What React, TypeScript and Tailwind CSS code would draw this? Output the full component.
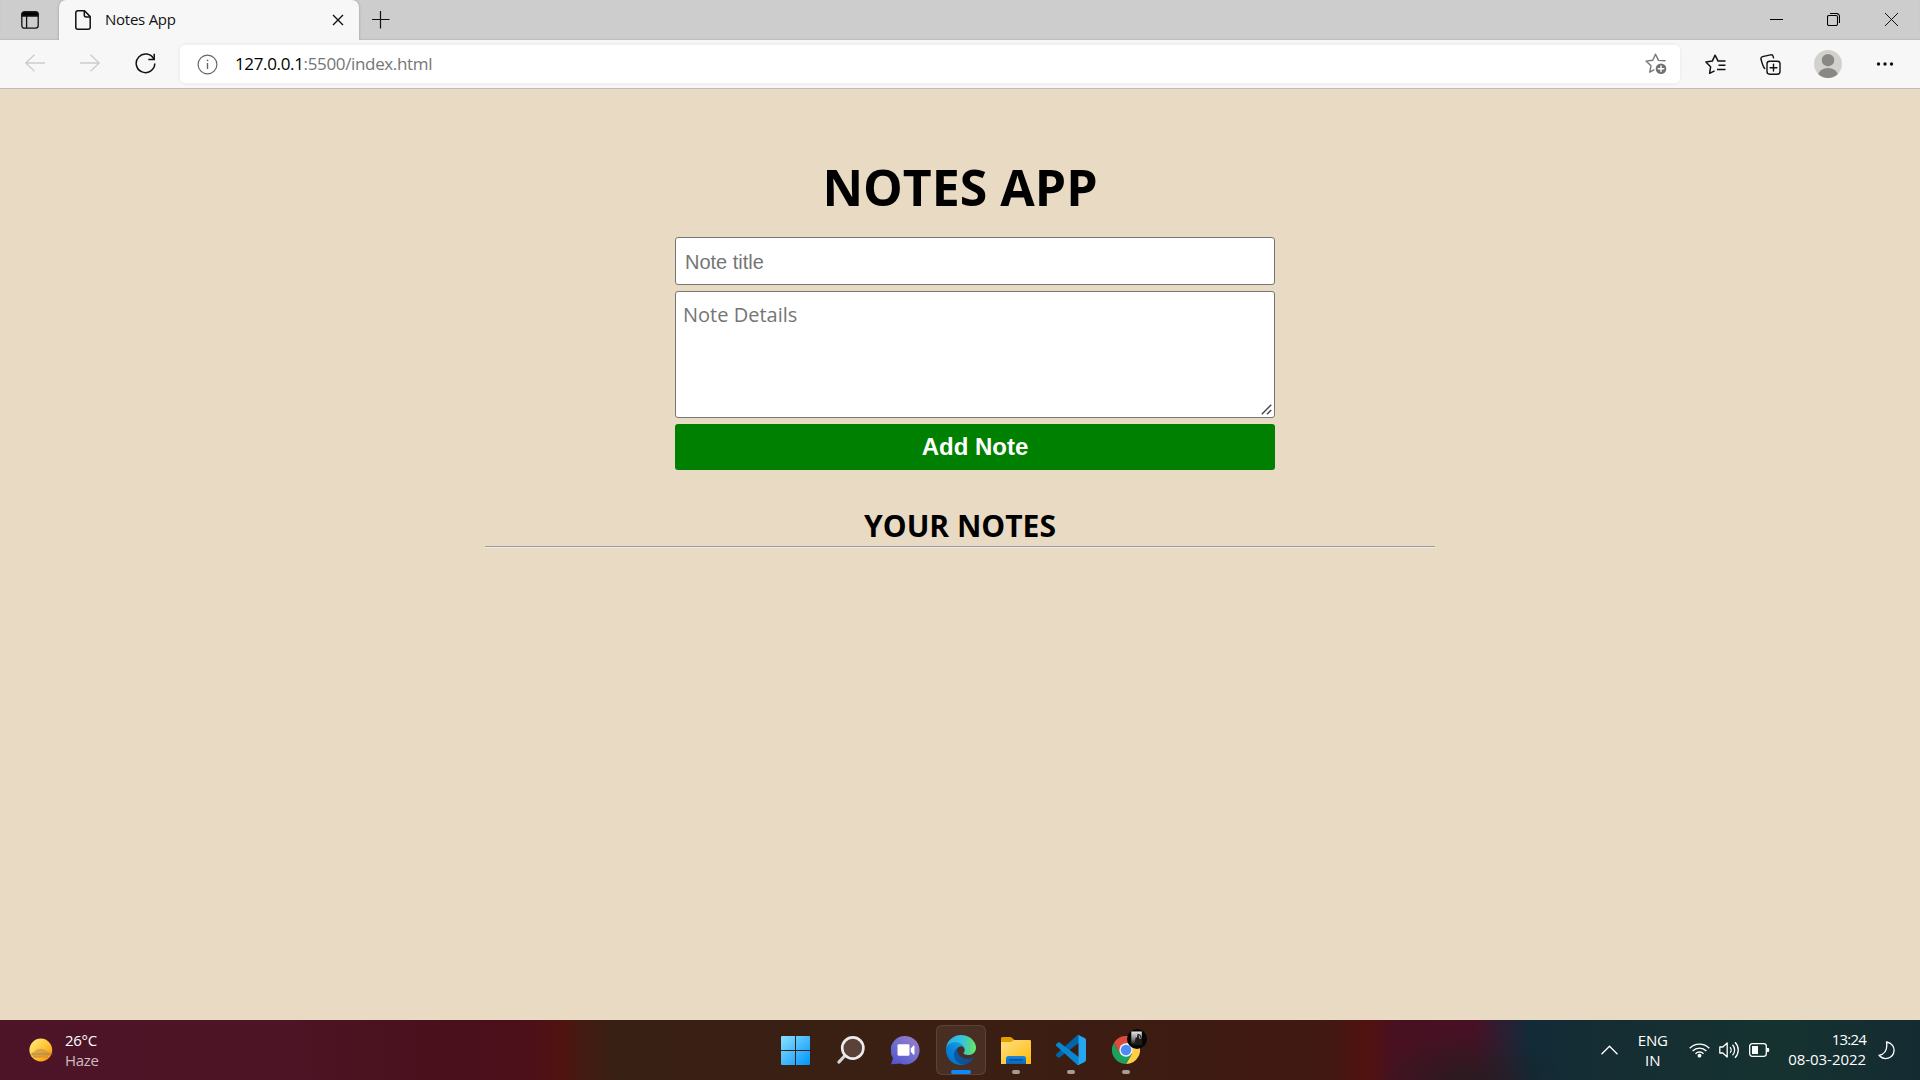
import React from "react";

function TabStrip() {
  return (
    <div className="flex h-10 shrink-0 bg-[#cdcdcd] shadow-[inset_0_-1px_1px_#bdbdbd]">
      <div className="flex w-[59px] items-center pl-[21px]">
        <svg width="18" height="18" viewBox="0 0 18 18" fill="none" stroke="#111" strokeWidth="1.3">
          <rect x="0.8" y="0.8" width="16.4" height="16.4" rx="2.6" />
          <path d="M1 3.4A2.4 2.4 0 0 1 3.4 1h11.2A2.4 2.4 0 0 1 17 3.4V5H1z" fill="#000" />
          <path d="M5.6 5v12" />
        </svg>
      </div>
      <div className="relative flex w-[300px] items-center rounded-t-[7px] bg-[#f7f7f7] pl-4 shadow-[0_0_3px_rgba(0,0,0,0.25)] [clip-path:inset(-4px_-4px_0_-4px)]">
        <svg width="16" height="20" viewBox="0 0 16 20" fill="none" stroke="#111" strokeWidth="1.5" strokeLinejoin="round">
          <path d="M2.8.8h6.7l5.7 5.8v10.6a2 2 0 0 1-2 2H2.8a2 2 0 0 1-2-2V2.8a2 2 0 0 1 2-2z" />
          <path d="M9.3 1v4a2 2 0 0 0 2 2H15" />
        </svg>
        <span className="mb-[2px] ml-[14px] text-[15px] leading-5 tracking-[-0.25px] text-[#111]">Notes App</span>
        <svg className="ml-auto mr-[15px]" width="12" height="12" viewBox="0 0 12 12" stroke="#111" strokeWidth="1.4">
          <path d="M1 1l10 10M11 1L1 11" />
        </svg>
      </div>
      <svg className="ml-[13px] mt-[11px]" width="18" height="18" viewBox="0 0 18 18" stroke="#111" strokeWidth="1.2">
        <path d="M0 8.5h17.500M8.500 0v17.500" />
      </svg>
      <div className="ml-auto flex items-center pb-[1px]">
        <svg className="mr-[44px]" width="13" height="13" viewBox="0 0 13 13" stroke="#000">
          <path d="M0 6.5h13" />
        </svg>
        <svg className="mr-[45px]" width="13" height="13" viewBox="0 0 13 13" fill="none" stroke="#000" strokeWidth="1.1">
          <rect x="0.5" y="2.5" width="10" height="10" rx="1.5" />
          <path d="M3 .5h6.500a3 3 0 0 1 3 3v6.500" />
        </svg>
        <svg className="mr-[22px]" width="13" height="13" viewBox="0 0 13 13" stroke="#111" strokeWidth="1">
          <path d="M0 0l13 13M13 0L0 13" />
        </svg>
      </div>
    </div>
  );
}

function AddressRow() {
  return (
    <div className="flex h-[49px] shrink-0 items-center border-b border-[#bcbcc0] bg-[#f7f7f7]">
      <svg className="mb-[2px] ml-[25px]" width="20" height="18" viewBox="0 0 20 18" fill="none" stroke="#cdcdcd" strokeWidth="1.3">
        <path d="M20 9H1M9.500.8L.8 9l8.700 8.200" />
      </svg>
      <svg className="mb-[2px] ml-[35px]" width="20" height="18" viewBox="0 0 20 18" fill="none" stroke="#cdcdcd" strokeWidth="1.3">
        <path d="M0 9h19M10.500.8L19.200 9l-8.700 8.200" />
      </svg>
      <svg className="mb-[1px] ml-[35px]" width="21" height="21" viewBox="0 0 21 21" fill="none" stroke="#111" strokeWidth="1.5">
        <path d="M18.900 6.300A9.300 9.300 0 1 0 19.800 10.500" />
        <path d="M19.200.8v5.700h-5.900" />
      </svg>
      <div className="ml-6 flex h-[38px] w-[1500px] items-center rounded-[5px] bg-white shadow-[0_0_4px_rgba(0,0,0,0.07)]">
        <svg className="ml-[17px]" width="21" height="21" viewBox="0 0 21 21" fill="none" stroke="#666" strokeWidth="1.2">
          <circle cx="10.5" cy="10.5" r="9.4" />
          <path d="M10.500 9v6" strokeWidth="1.4" />
          <circle cx="10.5" cy="6.3" r="0.9" fill="#666" stroke="none" />
        </svg>
        <span className="ml-[17px] text-[17px] leading-6 tracking-[-0.35px] text-[#757575]">
          <span className="text-black">127.0.0.1</span>:5500/index.html
        </span>
        <svg className="ml-auto mr-[13px]" width="22" height="22" viewBox="0 0 22 22" fill="none" stroke="#777" strokeWidth="1.4" strokeLinejoin="round" strokeLinecap="round">
          <path d="M20 7.800l-6.500-.4L10.500 1.200 7.800 7.300 1 8.100l5 4.700-1.300 6.400 4.200-2.300" />
          <circle cx="16" cy="15.8" r="5.3" fill="#707070" stroke="none" />
          <path d="M16 13v5.600M13.200 15.800h5.600" stroke="#fff" />
        </svg>
      </div>
      <svg className="ml-[25px]" width="21" height="21" viewBox="0 0 21 21" fill="none" stroke="#111" strokeWidth="1.5" strokeLinejoin="round">
        <path d="M13 6.800l-3-5.600-2.700 5.900-6.400.9 4.700 4.800-1 6.500 5-2.500M12.300 7h8.200M13.500 11.200h7M12 15.400h8.500" />
      </svg>
      <svg className="ml-[34px]" width="21" height="21" viewBox="0 0 21 21" fill="none" stroke="#111" strokeWidth="1.4" strokeLinecap="round">
        <rect x="7" y="7.2" width="13" height="13" rx="2.6" />
        <path d="M13.500 10.300v6.800M10.100 13.700h6.800" />
        <path d="M4.700 14.500C3.200 13.200 2.800 12 1 5.300.7 4 1.500 3 2.500 2.600L10.500.9c1.300-.3 2.400.4 2.700 1.700l.3 1.200" />
      </svg>
      <svg className="ml-8" width="30" height="30" viewBox="0 0 30 30">
        <clipPath id="avatar"><circle cx="15" cy="15" r="14" /></clipPath>
        <circle cx="15" cy="15" r="14" fill="#d3d1ce" />
        <g clipPath="url(#avatar)" fill="#8b8785">
          <circle cx="15" cy="11.2" r="6.2" />
          <ellipse cx="15" cy="27" rx="10" ry="8" />
        </g>
      </svg>
      <svg className="ml-[33px]" width="18" height="4" viewBox="0 0 18 4" fill="#111">
        <circle cx="2.5" cy="2" r="1.7" /><circle cx="9" cy="2" r="1.7" /><circle cx="15.5" cy="2" r="1.7" />
      </svg>
    </div>
  );
}

function NotesPage() {
  return (
    <main className="flex flex-1 flex-col items-center bg-[#e8dac3] pt-16">
      <h1 className="text-[50px] font-bold leading-[68px] text-black">NOTES APP</h1>
      <form className="ml-[30px] mt-4 flex w-[600px] flex-col gap-1.5">
        <input
          placeholder="Note title"
          className="h-12 rounded-[3px] border border-[#767676] bg-white px-[9px] pt-0.5 font-['Liberation_Sans',sans-serif] text-[20px] placeholder:text-[#757575]"
        />
        <div className="relative flex h-[127px]">
          <textarea
            placeholder="Note Details"
            className="w-full resize-none rounded-[3px] border border-[#767676] bg-white px-[7px] pt-[9px] text-[20px] leading-[27px] placeholder:text-[#757575]"
          />
          <svg className="absolute bottom-[3px] right-[3px]" width="11" height="11" viewBox="0 0 11 11" stroke="#4a4a4a" strokeWidth="1.5">
            <path d="M.8 10.200L10.200.8M6 10.200L10.200 6" />
          </svg>
        </div>
        <button
          type="button"
          className="h-[46px] rounded-[3px] bg-[#008000] font-['Liberation_Sans',sans-serif] text-[24px] font-bold text-white"
        >
          Add Note
        </button>
      </form>
      <h2 className="mt-[35px] text-[30px] font-bold leading-[41px] text-black">YOUR NOTES</h2>
      <hr className="w-[950px] border-0 border-t border-[#9a9a9a] shadow-[0_1px_0_#eeeeee]" />
    </main>
  );
}

function Slot({ children, running }: { children: React.ReactNode; running?: boolean }) {
  return (
    <div className="relative flex h-[60px] w-[55px] items-center justify-center">
      {children}
      {running && <span className="absolute bottom-[6px] left-6 h-1 w-2 rounded-full bg-[#a89a97]" />}
    </div>
  );
}

function WindowsIcon() {
  return (
    <svg width="29" height="29" viewBox="0 0 29 29">
      <linearGradient id="win" x1="0" y1="0" x2="29" y2="29" gradientUnits="userSpaceOnUse">
        <stop offset="0" stopColor="#8be0ff" /><stop offset="1" stopColor="#0093fb" />
      </linearGradient>
      <path d="M1 0h13v14H0V1a1 1 0 0 1 1-1zM15 0h13a1 1 0 0 1 1 1v13H15zM0 15h14v14H1a1 1 0 0 1-1-1zM15 15h14v13a1 1 0 0 1-1 1H15z" fill="url(#win)" />
    </svg>
  );
}

function SearchIcon() {
  return (
    <svg width="28" height="28" viewBox="0 0 28 28">
      <path d="M8.500 19L2 26" stroke="#d5d5d5" strokeWidth="3.3" strokeLinecap="round" />
      <circle cx="15.8" cy="12" r="10.6" fill="#5a4239" stroke="#ececec" strokeWidth="2.6" />
    </svg>
  );
}

function ChatIcon() {
  return (
    <svg width="29" height="29" viewBox="0 0 29 29">
      <linearGradient id="chat" x1="1" y1="0" x2="0.2" y2="1">
        <stop offset="0" stopColor="#a47bc9" /><stop offset="0.5" stopColor="#7471ce" /><stop offset="1" stopColor="#5257cf" />
      </linearGradient>
      <path d="M14.500 0A14.300 14.300 0 1 1 9 27.600L1.500 28.200C.5 28.300 0 27.500.5 26.700L2 22.200A14.300 14.300 0 0 1 14.500 0z" fill="url(#chat)" />
      <rect x="6.5" y="8.3" width="12" height="11.5" rx="1.3" fill="#fff" />
      <path d="M19.800 12.400l2.500-2.600c.6-.6 1.200-.4 1.200.4v7.800c0 .8-.6 1-1.200.4l-2.500-2.600z" fill="#fff" />
    </svg>
  );
}

function EdgeIcon() {
  return (
    <svg className="shrink-0" width="30" height="30" viewBox="0 0 256 256">
      <linearGradient id="edgeA" x1="63" y1="178" x2="241" y2="178" gradientUnits="userSpaceOnUse">
        <stop offset="0" stopColor="#0c59a4" /><stop offset="1" stopColor="#114a8b" />
      </linearGradient>
      <linearGradient id="edgeB" x1="157" y1="100" x2="46" y2="221" gradientUnits="userSpaceOnUse">
        <stop offset="0" stopColor="#1b9de2" /><stop offset="0.16" stopColor="#1595df" /><stop offset="0.67" stopColor="#0680d7" /><stop offset="1" stopColor="#0078d4" />
      </linearGradient>
      <linearGradient id="edgeC" x1="10" y1="90" x2="250" y2="110" gradientUnits="userSpaceOnUse">
        <stop offset="0" stopColor="#2cb1e4" /><stop offset="0.5" stopColor="#33c3e0" /><stop offset="0.8" stopColor="#50d48f" /><stop offset="1" stopColor="#66eb6e" />
      </linearGradient>
      <path fill="url(#edgeA)" d="M231 190.500c-3.400 1.800-6.900 3.400-10.500 4.700a101.700 101.700 0 0 1-35.900 6.400c-47.300 0-88.500-32.500-88.500-74.300 0-11.400 6.300-21.900 16.500-27.500-42.800 1.800-53.800 46.400-53.800 72.500 0 73.900 68.100 81.400 82.800 81.400 7.900 0 19.800-2.300 27-4.600l1.300-.4a128.300 128.300 0 0 0 66.600-52.800 4 4 0 0 0-5.500-5.400z" />
      <path fill="url(#edgeB)" d="M105.700 241.400a79.200 79.200 0 0 1-22.700-21.300 80.700 80.700 0 0 1 29.500-120c3.200-1.500 8.500-4.100 15.600-4a32.400 32.400 0 0 1 25.700 13 31.900 31.900 0 0 1 6.300 18.700c0-.2 24.500-79.600-80-79.600-43.900 0-80 41.700-80 78.200a130.200 130.200 0 0 0 12.100 56 128 128 0 0 0 156.400 67 75.500 75.500 0 0 1-62.800-8z" />
      <path fill="url(#edgeC)" d="M152.300 148.900c-.9 1-3.400 2.500-3.400 5.600 0 2.600 1.700 5.200 4.800 7.300 14.300 10 41.400 8.600 41.500 8.600a59.600 59.600 0 0 0 30.300-8.300 61.400 61.400 0 0 0 30.400-52.900c.3-22.400-8-37.300-11.300-43.900C223.500 23.900 177.700 0 128 0A128 128 0 0 0 0 126.200c.5-36.500 36.800-66 80-66 3.500 0 23.500.3 42 10.100 16.300 8.600 24.900 18.900 30.800 29.200 6.200 10.700 7.300 24.100 7.300 29.500 0 5.300-2.700 13.300-7.800 19.900z" />
    </svg>
  );
}

function FolderIcon() {
  return (
    <svg width="30" height="27" viewBox="0 0 30 27">
      <linearGradient id="fold" x1="0" y1="0" x2="1" y2="1">
        <stop offset="0" stopColor="#ffe083" /><stop offset="1" stopColor="#ffba0a" />
      </linearGradient>
      <linearGradient id="pocket" x1="0" y1="0" x2="0" y2="1">
        <stop offset="0" stopColor="#1a86d9" /><stop offset="1" stopColor="#0b67b8" />
      </linearGradient>
      <path d="M1.500 0h7.700c.5 0 1 .2 1.300.5L13.500 3v4H0V1.500A1.500 1.500 0 0 1 1.500 0z" fill="#e4a000" />
      <path d="M0 5h9.500c.5 0 .9-.1 1.300-.5L12 3.500c.3-.3.7-.5 1.200-.5H28.800A1.200 1.200 0 0 1 30 4.200V27H0z" fill="url(#fold)" />
      <path d="M5 27v-5.500A2.500 2.500 0 0 1 7.500 19h15a2.500 2.500 0 0 1 2.500 2.500V27z" fill="url(#pocket)" />
      <path d="M8.500 22.800h13" stroke="#064a8c" strokeWidth="1.2" strokeLinecap="round" />
    </svg>
  );
}

function CodeIcon() {
  return (
    <svg width="30" height="30" viewBox="0 0 100 100">
      <path d="M96.500 10.800L75.900.9a6.200 6.200 0 0 0-7.100 1.200L1.300 63.600a4.200 4.200 0 0 0 0 6.200l5.500 5a4.200 4.200 0 0 0 5.300.2L93.400 13.400c2.700-2.100 6.600-.1 6.600 3.300v-.2a6.300 6.300 0 0 0-3.500-5.700z" fill="#0065a9" />
      <path d="M96.500 89.200l-20.600 9.900a6.200 6.200 0 0 1-7.100-1.200L1.300 36.400a4.200 4.200 0 0 1 0-6.200l5.500-5a4.200 4.200 0 0 1 5.300-.2l81.300 61.600c2.700 2.100 6.600.1 6.600-3.300v.2a6.300 6.300 0 0 1-3.500 5.700z" fill="#0a86d1" />
      <path d="M75.900 99.100a6.200 6.200 0 0 1-7.100-1.200c2.300 2.300 6.200.7 6.200-2.600V4.700c0-3.300-3.900-4.900-6.200-2.600A6.200 6.200 0 0 1 75.900.9l20.600 9.900a6.300 6.300 0 0 1 3.500 5.700v67a6.300 6.300 0 0 1-3.500 5.700z" fill="#26a5f0" />
    </svg>
  );
}

function ChromeIcon() {
  return (
    <>
      <svg width="28" height="28" viewBox="0 0 48 48">
        <path d="M3.200 12A24 24 0 0 1 44.800 12H24L13.600 30z" fill="#dd4b3e" />
        <path d="M44.800 12A24 24 0 0 1 24 48L34.400 30 24 12z" fill="#ffce44" />
        <path d="M24 48A24 24 0 0 1 3.200 12l10.400 18h20.800z" fill="#1da15f" />
        <circle cx="24" cy="24" r="11.5" fill="#f1f3f4" />
        <circle cx="24" cy="24" r="9" fill="#4c8bf5" />
      </svg>
      <svg className="absolute left-[29px] top-[9px]" width="20" height="20" viewBox="0 0 20 20">
        <linearGradient id="badge" x1="0" y1="0" x2="0" y2="1">
          <stop offset="0" stopColor="#e8e8e8" /><stop offset="0.55" stopColor="#8a8a8a" /><stop offset="1" stopColor="#151515" />
        </linearGradient>
        <circle cx="10" cy="10" r="10" fill="#060606" />
        <path d="M4.300 2.500h10.500v13H4.300z" fill="url(#badge)" />
        <path d="M7.500 16l1-7 2-4.500 3 1.500 1.500 4v6z" fill="#1c1c1c" />
        <path d="M10.200 4.500l-1 4M12 6.500l1.300 3.500" stroke="#ddd" strokeWidth="0.9" />
      </svg>
    </>
  );
}

function Taskbar() {
  return (
    <footer className="grid h-[60px] shrink-0 grid-cols-[768px_386px_1fr] text-[15px] leading-5 text-white [background:linear-gradient(90deg,#4d1428_0,#4c1424_300px,#4a101c_440px,#4b101a_525px,#51130f_562px,#431b12_582px,#392014_615px,#3b1f13_960px,#3e1b12_1200px,#411812_1330px,#52120f_1366px,#481121_1395px,#471125_1475px,#2b1f33_1505px,#122b38_1530px,#152d33_1600px,#163230_1780px,#142b32_1920px)]">
      <div className="flex items-center pl-[29px]">
        <svg width="24" height="24" viewBox="0 0 24 24">
          <linearGradient id="sun" x1="0" y1="0" x2="1" y2="1">
            <stop offset="0" stopColor="#ffee84" /><stop offset="0.5" stopColor="#ffc63a" /><stop offset="1" stopColor="#ff8a00" />
          </linearGradient>
          <circle cx="11.8" cy="12" r="11.4" fill="url(#sun)" />
          <path d="M5 14c2-4 9.500-4.500 12.500-1l3 1 1.500 1.500-2 2.500-14.500 1-3.500-2 1-2z" fill="#b98a4a" opacity="0.55" />
          <path d="M1.500 16h22M4 19h15" stroke="#a97a3c" strokeWidth="0.9" opacity="0.7" />
        </svg>
        <div className="ml-3 flex flex-col tracking-[-0.3px]">
          <span>26°C</span>
          <span className="text-[#cdbcc2]">Haze</span>
        </div>
      </div>
      <div className="flex">
        <Slot><WindowsIcon /></Slot>
        <Slot><SearchIcon /></Slot>
        <Slot><ChatIcon /></Slot>
        <div className="ml-[3px] mr-[2px] mt-[5px] flex size-[50px] flex-col items-center rounded-md border border-white/10 bg-white/[0.07] pt-[9px]">
          <EdgeIcon />
          <span className="mt-[5px] h-1 w-5 shrink-0 rounded-full bg-[#0a8cff]" />
        </div>
        <Slot running><FolderIcon /></Slot>
        <Slot running><CodeIcon /></Slot>
        <Slot running><ChromeIcon /></Slot>
      </div>
      <div className="flex items-center justify-end bg-[radial-gradient(95px_50px_at_315px_62px,rgba(30,30,30,0.75),transparent)]">
        <svg width="17" height="10" viewBox="0 0 17 10" fill="none" stroke="#fff" strokeWidth="1.3">
          <path d="M.5 9.200l8-8 8 8" />
        </svg>
        <div className="ml-[19px] flex w-[31px] flex-col items-center">
          <span className="tracking-[-0.2px]">ENG</span>
          <span>IN</span>
        </div>
        <svg className="ml-[21px]" width="21" height="16" viewBox="0 0 21 16" fill="none" stroke="#fff" strokeWidth="1.4">
          <path d="M.7 6.200a13.800 13.800 0 0 1 19.600 0M3.600 9a9.800 9.800 0 0 1 13.800 0M6.500 11.700a5.700 5.700 0 0 1 8 0" />
          <circle cx="10.5" cy="13.7" r="1.9" fill="#fff" stroke="none" />
        </svg>
        <svg className="ml-[9px]" width="21" height="18" viewBox="0 0 21 18" fill="none" stroke="#fff" strokeWidth="1.3" strokeLinejoin="round">
          <path d="M.8 6h3l4.400-4v14l-4.400-4h-3z" />
          <path d="M11 6.200a4 4 0 0 1 0 5.600M13.500 3.800a7.400 7.400 0 0 1 0 10.400M16 1.200a11 11 0 0 1 0 15.600" />
        </svg>
        <svg className="ml-[9px]" width="21" height="14" viewBox="0 0 21 14" fill="none" stroke="#fff" strokeWidth="1.3">
          <rect x="0.7" y="0.7" width="16.6" height="12.6" rx="2.5" />
          <rect x="3" y="3" width="6" height="8" fill="#fff" stroke="none" />
          <path d="M18 5h1.200a1 1 0 0 1 1 1v2a1 1 0 0 1-1 1H18z" fill="#fff" stroke="none" />
        </svg>
        <div className="mb-[3px] ml-[18px] flex flex-col items-end">
          <span className="tracking-[-0.8px]">13:24</span>
          <span className="tracking-[-0.05px]">08-03-2022</span>
        </div>
        <svg className="ml-3 mr-[25px]" width="17" height="19" viewBox="0 0 17 19" fill="none" stroke="#fff" strokeWidth="1.3" strokeLinejoin="round">
          <path d="M8.500 1c5.500.7 8 5.200 7.500 9.200-.7 6.800-9.500 10.300-15 4.100C6 13.300 9.800 9.300 8.500 1z" />
        </svg>
      </div>
    </footer>
  );
}

export default function App() {
  return (
    <div className="flex h-[1080px] w-[1920px] flex-col overflow-hidden font-['Open_Sans',sans-serif]">
      <TabStrip />
      <AddressRow />
      <NotesPage />
      <Taskbar />
    </div>
  );
}
